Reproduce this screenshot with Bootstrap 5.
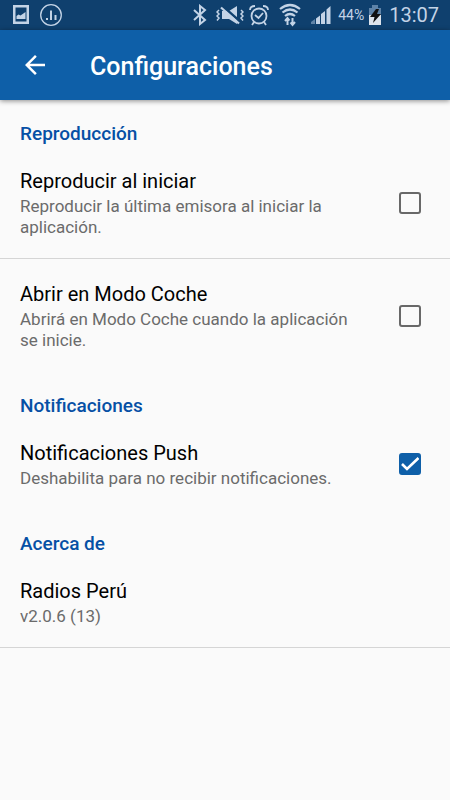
<!DOCTYPE html>
<html lang="es">
<head>
<meta charset="utf-8">
<meta name="viewport" content="width=device-width, initial-scale=1">
<title>Configuraciones</title>
<link href="https://cdn.jsdelivr.net/npm/bootstrap@5.3.0/dist/css/bootstrap.min.css" rel="stylesheet">
<style>
  body { font-family: Roboto, "Noto Sans", sans-serif; background: #fafafa; color: #000; }
  .status-strip { height: 30px; background: #0f406e; color: #c3d3e6; padding: 0 11px 0 12px; }
  .battery-text { font-size: 14px; line-height: 20px; margin-left: 6px; margin-right: 4px; }
  .clock-text { font-size: 20px; line-height: 30px; margin-left: 7px; }
  .app-bar { height: 70px; background: #0e5fa8; color: #fff; padding: 0 20px; box-shadow: 0 1px 5px rgba(0,0,0,.45); }
  .app-bar h1 { font-size: 25px; line-height: 30px; font-weight: 500; margin-left: 40px; padding-top: 3px; }
  .group-title { font-size: 19px; line-height: 21px; font-weight: 500; color: #0650a5; padding: 23px 20px 3px; }
  .setting { padding: 20px 29px 20px 20px; border-bottom: 1px solid transparent; }
  .setting + .setting { padding-top: 21px; }
  .setting.ruled { border-bottom-color: #d5d5d5; }
  .setting-name { font-size: 20px; line-height: 28px; }
  .setting-note { font-size: 17px; line-height: 21px; color: #6b6b6b; padding-top: 1px; }
  .setting .form-check-input { width: 22px; height: 22px; border: 2px solid #686868; border-radius: 3px; background-color: transparent; margin-left: 36px; }
  .setting .form-check-input:checked { background-color: #0e5fa8; border-color: #0e5fa8; background-size: 22px;
    background-image: url("data:image/svg+xml,%3Csvg xmlns='http://www.w3.org/2000/svg' viewBox='0 0 22 22'%3E%3Cpath d='M3 11l5 5L19.500 5' fill='none' stroke='%23fff' stroke-width='2.6'/%3E%3C/svg%3E"); background-position: center; }
</style>
</head>
<body>
<div class="status-strip d-flex align-items-center">
  <svg width="18" height="20" viewBox="0 0 18 20" aria-hidden="true"><path fill="#c3d3e6" fill-rule="evenodd" d="M1 0h16v19H1zM3.500 2.500v14h11v-14z"/><path fill="#c3d3e6" d="M4.500 14v-3l2-1.500 2 1 5-3.500v7z"/></svg>
  <svg class="ms-2 me-auto" width="26" height="24" viewBox="0 0 26 24" fill="none" stroke="#c3d3e6" aria-hidden="true"><circle cx="13" cy="12" r="10.300" stroke-width="1.300"/><path stroke-width="2" d="M9 15v2M13 7.500V17M17.500 12v5"/></svg>
  <svg width="16" height="22" viewBox="0 0 16 22" fill="none" stroke="#c3d3e6" stroke-width="2" aria-hidden="true"><path d="M2 6l11 10-5 4V2l5 4L2 16"/></svg>
  <svg class="ms-2" width="28" height="22" viewBox="0 0 28 22" aria-hidden="true"><path fill="#c3d3e6" d="M6 7h7l8-5v18l-8-5H6z"/><path stroke="#0f406e" stroke-width="2.500" d="M7 2.500l17 15"/><path stroke="#c3d3e6" stroke-width="2.200" d="M5 3.500l18 16"/><path fill="none" stroke="#c3d3e6" stroke-width="1.500" d="M3 6L1 8l2 2-2 2 2 2-2 2.500M25 6l2 2-2 2 2 2-2 2 2 2.500"/></svg>
  <svg class="ms-1" width="22" height="22" viewBox="0 0 20 22" fill="none" stroke="#c3d3e6" stroke-width="1.800" aria-hidden="true"><circle cx="10" cy="12" r="7.500"/><path d="M6 11l3.500 3 4.500-5M1 6q0-4 5-4M19 6q0-4-5-4M5 18l-2 3M15 18l2 3"/></svg>
  <svg class="ms-2" width="24" height="24" viewBox="0 0 24 24" fill="none" stroke="#c3d3e6" stroke-width="2.200" aria-hidden="true"><path d="M2 6q10-8 20 0M4.500 9.500q7.500-6 15 0M7 13q5-4 10 0"/><path d="M9.500 22v-7M7 18l2.500-3 2 2.500M14.500 15v7M12.500 19.500l2 2.500 2.500-3" stroke-width="2"/></svg>
  <svg class="ms-2" width="22" height="22" viewBox="0 0 22 22" aria-hidden="true"><path fill="#5e83a8" d="M1 20v-2l4-3v5z"/><path fill="#c3d3e6" d="M6 14.500l4-3V20H6zM11 10l4-3v13h-4zM16.500 5.500l4-3.500v18h-4z"/></svg>
  <span class="battery-text">44%</span>
  <svg width="14" height="22" viewBox="0 0 14 22" aria-hidden="true"><path fill="#5e83a8" d="M4 1h6v3h3v7H1V4h3z"/><path fill="#dce3eb" d="M1 11h12v10H1z"/><path fill="#111" d="M8 5h3l-2 5h4l-8 9 1.500-6H2z"/></svg>
  <time class="clock-text">13:07</time>
</div>
<header class="app-bar d-flex align-items-center">
  <button type="button" class="btn p-0 border-0 text-white lh-1" aria-label="Volver"><svg width="30" height="30" viewBox="0 0 24 24" fill="currentColor" aria-hidden="true"><path d="M20 11H7.830l5.590-5.590L12 4l-8 8 8 8 1.410-1.410L7.830 13H20z"/></svg></button>
  <h1 class="mb-0">Configuraciones</h1>
</header>
<main>
  <section>
    <h2 class="group-title mb-0">Reproducción</h2>
    <div class="setting ruled d-flex align-items-center">
      <label class="flex-grow-1" for="autoplay"><span class="setting-name d-block">Reproducir al iniciar</span><span class="setting-note d-block">Reproducir la última emisora al iniciar la aplicación.</span></label>
      <input class="form-check-input mt-0 flex-shrink-0" type="checkbox" id="autoplay">
    </div>
    <div class="setting d-flex align-items-center">
      <label class="flex-grow-1" for="carmode"><span class="setting-name d-block">Abrir en Modo Coche</span><span class="setting-note d-block">Abrirá en Modo Coche cuando la aplicación se inicie.</span></label>
      <input class="form-check-input mt-0 flex-shrink-0" type="checkbox" id="carmode">
    </div>
  </section>
  <section>
    <h2 class="group-title mb-0">Notificaciones</h2>
    <div class="setting d-flex align-items-center">
      <label class="flex-grow-1" for="push"><span class="setting-name d-block">Notificaciones Push</span><span class="setting-note d-block">Deshabilita para no recibir notificaciones.</span></label>
      <input class="form-check-input mt-0 flex-shrink-0" type="checkbox" id="push" checked>
    </div>
  </section>
  <section>
    <h2 class="group-title mb-0">Acerca de</h2>
    <div class="setting ruled">
      <div class="setting-name">Radios Perú</div>
      <div class="setting-note">v2.0.6 (13)</div>
    </div>
  </section>
</main>
<script src="https://cdn.jsdelivr.net/npm/bootstrap@5.3.0/dist/js/bootstrap.bundle.min.js"></script>
</body>
</html>
